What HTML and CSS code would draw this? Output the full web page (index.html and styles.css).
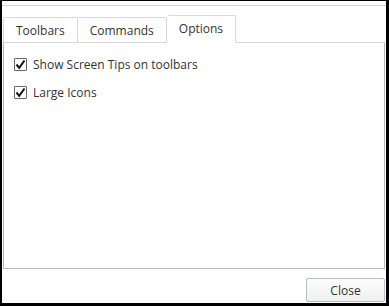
FILE: index.html
```html
<!DOCTYPE html>
<html lang="en">
<head>
  <meta charset="UTF-8" />
  <title>Customize</title>
  <link rel="stylesheet" href="styles.css">
</head>
<body>
  <div class="window">
    <div class="topline"></div>
    <div class="tabs">
      <div class="tab">Toolbars</div>
      <div class="tab">Commands</div>
      <div class="tab active">Options</div>
    </div>
    <div class="pane">
      <label class="check"><span class="box"><svg width="11" height="11" viewBox="0 0 11 11"><path d="M1.5 5.5 L4.2 8.8 L9.5 1.5" fill="none" stroke="#111" stroke-width="2"/></svg></span>Show Screen Tips on toolbars</label>
      <label class="check"><span class="box"><svg width="11" height="11" viewBox="0 0 11 11"><path d="M1.5 5.5 L4.2 8.8 L9.5 1.5" fill="none" stroke="#111" stroke-width="2"/></svg></span>Large Icons</label>
    </div>
    <div class="footer">
      <button class="btn">Close</button>
    </div>
  </div>
</body>
</html>
```

FILE: styles.css
```css
* {
  box-sizing: border-box;
  margin: 0;
  padding: 0;
}

body {
  width: 389px;
  height: 306px;
  background: #000;
  font-family: 'Open Sans', sans-serif;
  font-size: 12px;
  color: #333;
}

.window {
  margin: 1px 3px 3px 2px;
  height: 302px;
  background: #fff;
  display: flex;
  flex-direction: column;
  padding: 0 1px;
}

.topline {
  height: 1px;
  background: #d6d6d6;
  margin: 4px -1px 0 -1px;
}

.tabs {
  display: flex;
  align-items: flex-end;
  height: 37px;
  margin-bottom: -1px;
}

.tab {
  height: 26px;
  padding: 0 12px;
  border: 1px solid #d8d8dc;
  border-bottom: none;
  border-left: none;
  border-radius: 2px 2px 0 0;
  display: flex;
  align-items: center;
  background: #fff;
}

.tab:first-child {
  border-left: 1px solid #d8d8dc;
}

.tab.active {
  height: 28px;
  padding: 0 12px 2px;
  border-bottom: 1px solid #fff;
  position: relative;
  z-index: 1;
}

.pane {
  height: 227px;
  border: 1px solid #b8b8b8;
  border-top-color: #d8d8dc;
  padding: 12px 10px;
  display: flex;
  flex-direction: column;
  gap: 9px;
}

.check {
  display: flex;
  align-items: center;
  gap: 6px;
  height: 19px;
}

.box {
  width: 13px;
  height: 13px;
  border: 1px solid #666;
  border-radius: 1px;
  display: flex;
  align-items: center;
  justify-content: center;
}

.footer {
  display: flex;
  justify-content: flex-end;
  padding-top: 9px;
}

.btn {
  width: 79px;
  height: 24px;
  font-family: 'Open Sans', sans-serif;
  font-size: 12px;
  color: #333;
  background: linear-gradient(#fdfdfd, #f0f0f0);
  border: 1px solid #b8bcc4;
  border-radius: 2px;
}
```
